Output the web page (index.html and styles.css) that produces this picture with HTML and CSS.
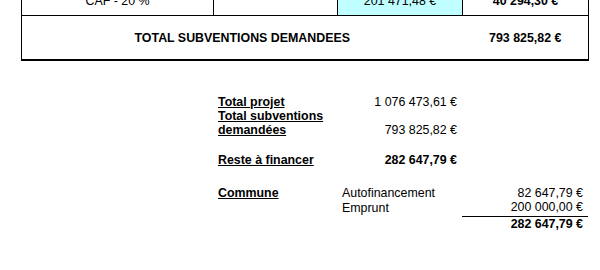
FILE: index.html
```html
<!DOCTYPE html>
<html lang="fr">
<head>
<meta charset="utf-8">
<title>Plan de financement</title>
<link rel="stylesheet" href="styles.css">
</head>
<body>
<table class="grid">
  <colgroup><col class="c1"><col class="c2"><col class="c3"><col class="c4"></colgroup>
  <tr class="row-caf">
    <td>CAF - 20 %</td>
    <td></td>
    <td class="cyan">201 471,48 €</td>
    <td class="strong">40 294,30 €</td>
  </tr>
  <tr class="row-total">
    <td colspan="3" class="strong total-label">TOTAL SUBVENTIONS DEMANDEES</td>
    <td class="strong total-value">793 825,82 €</td>
  </tr>
</table>

<table class="summary">
  <colgroup><col class="c1"><col class="c2"><col class="c3"><col class="c4"></colgroup>
  <tr>
    <td></td>
    <td><span class="lbl">Total projet</span></td>
    <td class="num">1 076 473,61 €</td>
    <td></td>
  </tr>
  <tr>
    <td></td>
    <td><span class="lbl">Total subventions demandées</span></td>
    <td class="num">793 825,82 €</td>
    <td></td>
  </tr>
  <tr class="gap-a"><td colspan="4"></td></tr>
  <tr>
    <td></td>
    <td><span class="lbl">Reste à financer</span></td>
    <td class="num strong">282 647,79 €</td>
    <td></td>
  </tr>
  <tr class="gap-b"><td colspan="4"></td></tr>
  <tr>
    <td></td>
    <td><span class="lbl">Commune</span></td>
    <td>Autofinancement</td>
    <td class="num">82 647,79 €</td>
  </tr>
  <tr class="row-emprunt">
    <td></td>
    <td></td>
    <td>Emprunt</td>
    <td class="num ruled">200 000,00 €</td>
  </tr>
  <tr>
    <td></td>
    <td></td>
    <td></td>
    <td class="num strong">282 647,79 €</td>
  </tr>
</table>
</body>
</html>
```

FILE: styles.css
```css
html, body {
  margin: 0;
  padding: 0;
  background: #fff;
}

body {
  font-family: "Liberation Sans", Arial, Helvetica, sans-serif;
  font-size: 12.4px;
  color: #000;
}

table {
  border-collapse: collapse;
  table-layout: fixed;
  width: 567px;
  margin-left: 21px;
}

.c1 { width: 192px; }
.c2 { width: 124px; }
.c3 { width: 125px; }
.c4 { width: 126px; }

.grid {
  margin-top: -15px;
}

.grid td {
  border: 1px solid #000;
  text-align: center;
  padding: 0;
}

.row-caf td {
  height: 29px;
}

.grid .row-total td {
  height: 43px;
  border-bottom-width: 2px;
}

.grid .total-label {
  border-right: none;
}

.grid .total-value {
  border-left: none;
}

.cyan {
  background: #c0ffff;
}

.strong {
  font-weight: bold;
}

.summary {
  margin-top: 34px;
}

.summary td {
  padding: 0 5px;
  line-height: 14px;
  vertical-align: bottom;
}

.lbl {
  font-weight: bold;
  text-decoration: underline;
}

.num {
  text-align: right;
}

.gap-a td { height: 16px; padding: 0; }
.gap-b td { height: 19px; padding: 0; }

.row-emprunt td {
  padding-bottom: 2px;
}

.ruled {
  border-bottom: 1px solid #000;
}
```
